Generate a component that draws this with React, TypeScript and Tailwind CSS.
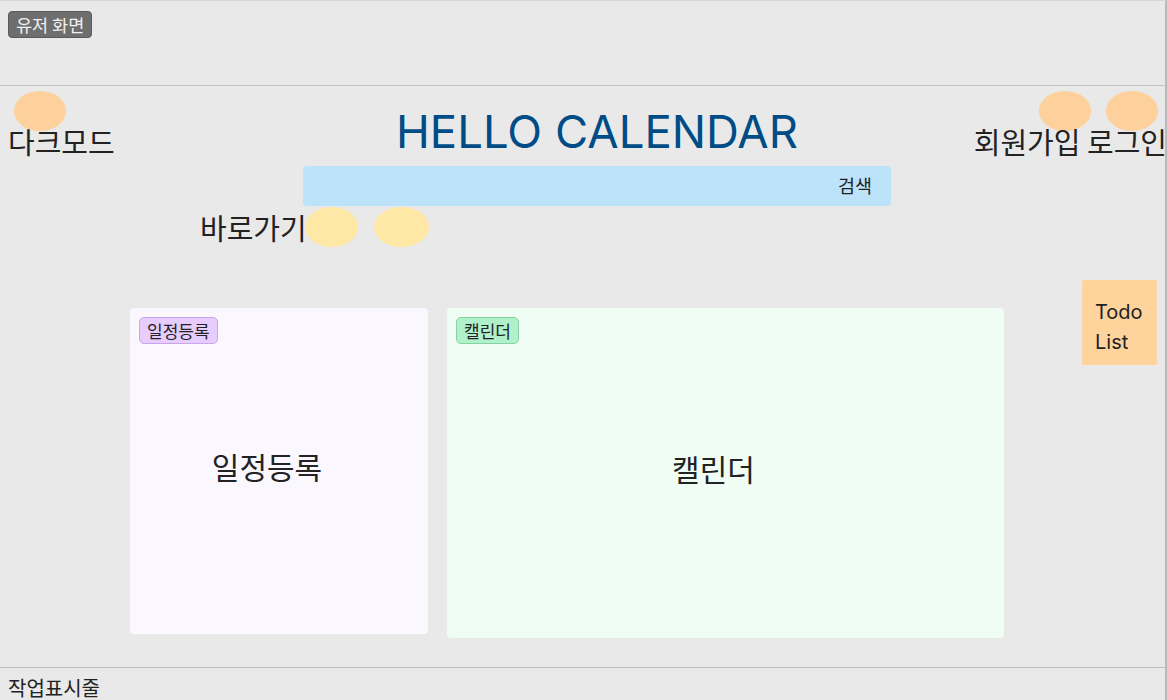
import React from "react";

const font = { fontFamily: '"Noto Sans CJK KR", "Noto Sans", sans-serif' };
const latin = { fontFamily: 'Inter, "Noto Sans CJK KR", sans-serif' };

const Dot = ({ className = "" }: { className?: string }) => (
  <div className={`h-[40px] rounded-[50%] ${className}`} />
);

const Card = ({
  label,
  className,
  badgeClass,
}: {
  label: string;
  className: string;
  badgeClass: string;
}) => (
  <div className={`relative flex items-center justify-center pr-[24px] pb-[10px] rounded-[4px] ${className}`}>
    {/* badge sits over the card corner */}
    <span
      className={`absolute top-[9px] left-[9px] px-[7px] h-[27px] leading-[25px] rounded-[5px] border text-[17px] text-[#222] ${badgeClass}`}
    >
      {label}
    </span>
    <span className="text-[30px] text-[#222]">{label}</span>
  </div>
);

export default function App() {
  return (
    <div
      className="w-full h-[700px] overflow-hidden bg-[#e9e9e9] border-t border-t-[#d6d6d6] border-r-2 border-r-[#b9b9b9] flex flex-col"
      style={font}
    >
      {/* HEADER */}
      <div className="h-[85px] shrink-0 border-b border-[#c4c4c4] px-2 pt-[10px]">
        <span className="inline-block px-[7px] h-[27px] leading-[25px] rounded-[4px] bg-[#6e6e6e] border border-[#5a5a5a] text-[17.5px] text-[#f1f1f1]">
          유저 화면
        </span>
      </div>

      {/* MAIN */}
      <div className="flex-1 flex flex-col">
        <div className="flex">
          {/* left */}
          <div className="w-[303px] pl-2 pt-[5px]">
            <Dot className="ml-[6px] w-[52px] bg-[#fed19c]" />
            <div className="-mt-[7px] text-[29px] leading-[34px] text-[#222]">다크모드</div>
          </div>

          {/* center */}
          <div className="w-[588px] flex flex-col items-center">
            <h1
              className="mt-[15px] text-[45.5px] leading-[62px] text-[#004c86]"
              style={latin}
            >
              HELLO CALENDAR
            </h1>
            <div className="mt-[3px] w-full h-[40px] rounded-[3px] bg-[#bde3fb] flex items-center justify-end pr-[19px] text-[18.5px] text-[#222]">
              검색
            </div>
          </div>

          {/* right */}
          <div className="flex-1 flex flex-col items-end pt-[5px]">
            <div className="flex gap-[15px] pr-[7px]">
              <Dot className="w-[52px] bg-[#fed19c]" />
              <Dot className="w-[52px] bg-[#fed19c]" />
            </div>
            <div className="-mt-[7px] -mr-[2px] text-[29px] leading-[34px] text-[#222] whitespace-nowrap">
              회원가입 로그인
            </div>
          </div>
        </div>

        {/* shortcuts */}
        <div className="flex items-center pl-[200px] mt-[1px]">
          <span className="text-[29px] leading-[40px] text-[#222] whitespace-nowrap">바로가기</span>
          <Dot className="-ml-[2px] w-[53px] bg-[#ffe8a5]" />
          <Dot className="ml-[16px] w-[55px] bg-[#ffe8a5]" />
        </div>

        {/* cards */}
        <div className="flex items-start pl-[130px] mt-[33px]">
          <Card
            label="일정등록"
            className="mt-[28px] w-[298px] h-[326px] bg-[#faf7ff]"
            badgeClass="bg-[#e6cdfd] border-[#c8a6ea]"
          />
          <Card
            label="캘린더"
            className="mt-[28px] ml-[19px] w-[557px] h-[330px] bg-[#f0fdf4]"
            badgeClass="bg-[#b0f0cb] border-[#86d2a5]"
          />
          <div
            className="ml-[78px] w-[75px] h-[85px] rounded-[2px] bg-[#fed39c] pl-[13px] pt-[17px] text-[20px] leading-[30px] text-[#222]"
            style={latin}
          >
            Todo
            <br />
            List
          </div>
        </div>
      </div>

      {/* FOOTER */}
      <div className="h-[33px] shrink-0 border-t border-[#bdbdbd] px-2 pt-[6px] text-[20px] leading-[28px] text-[#222]">
        작업표시줄
      </div>
    </div>
  );
}
